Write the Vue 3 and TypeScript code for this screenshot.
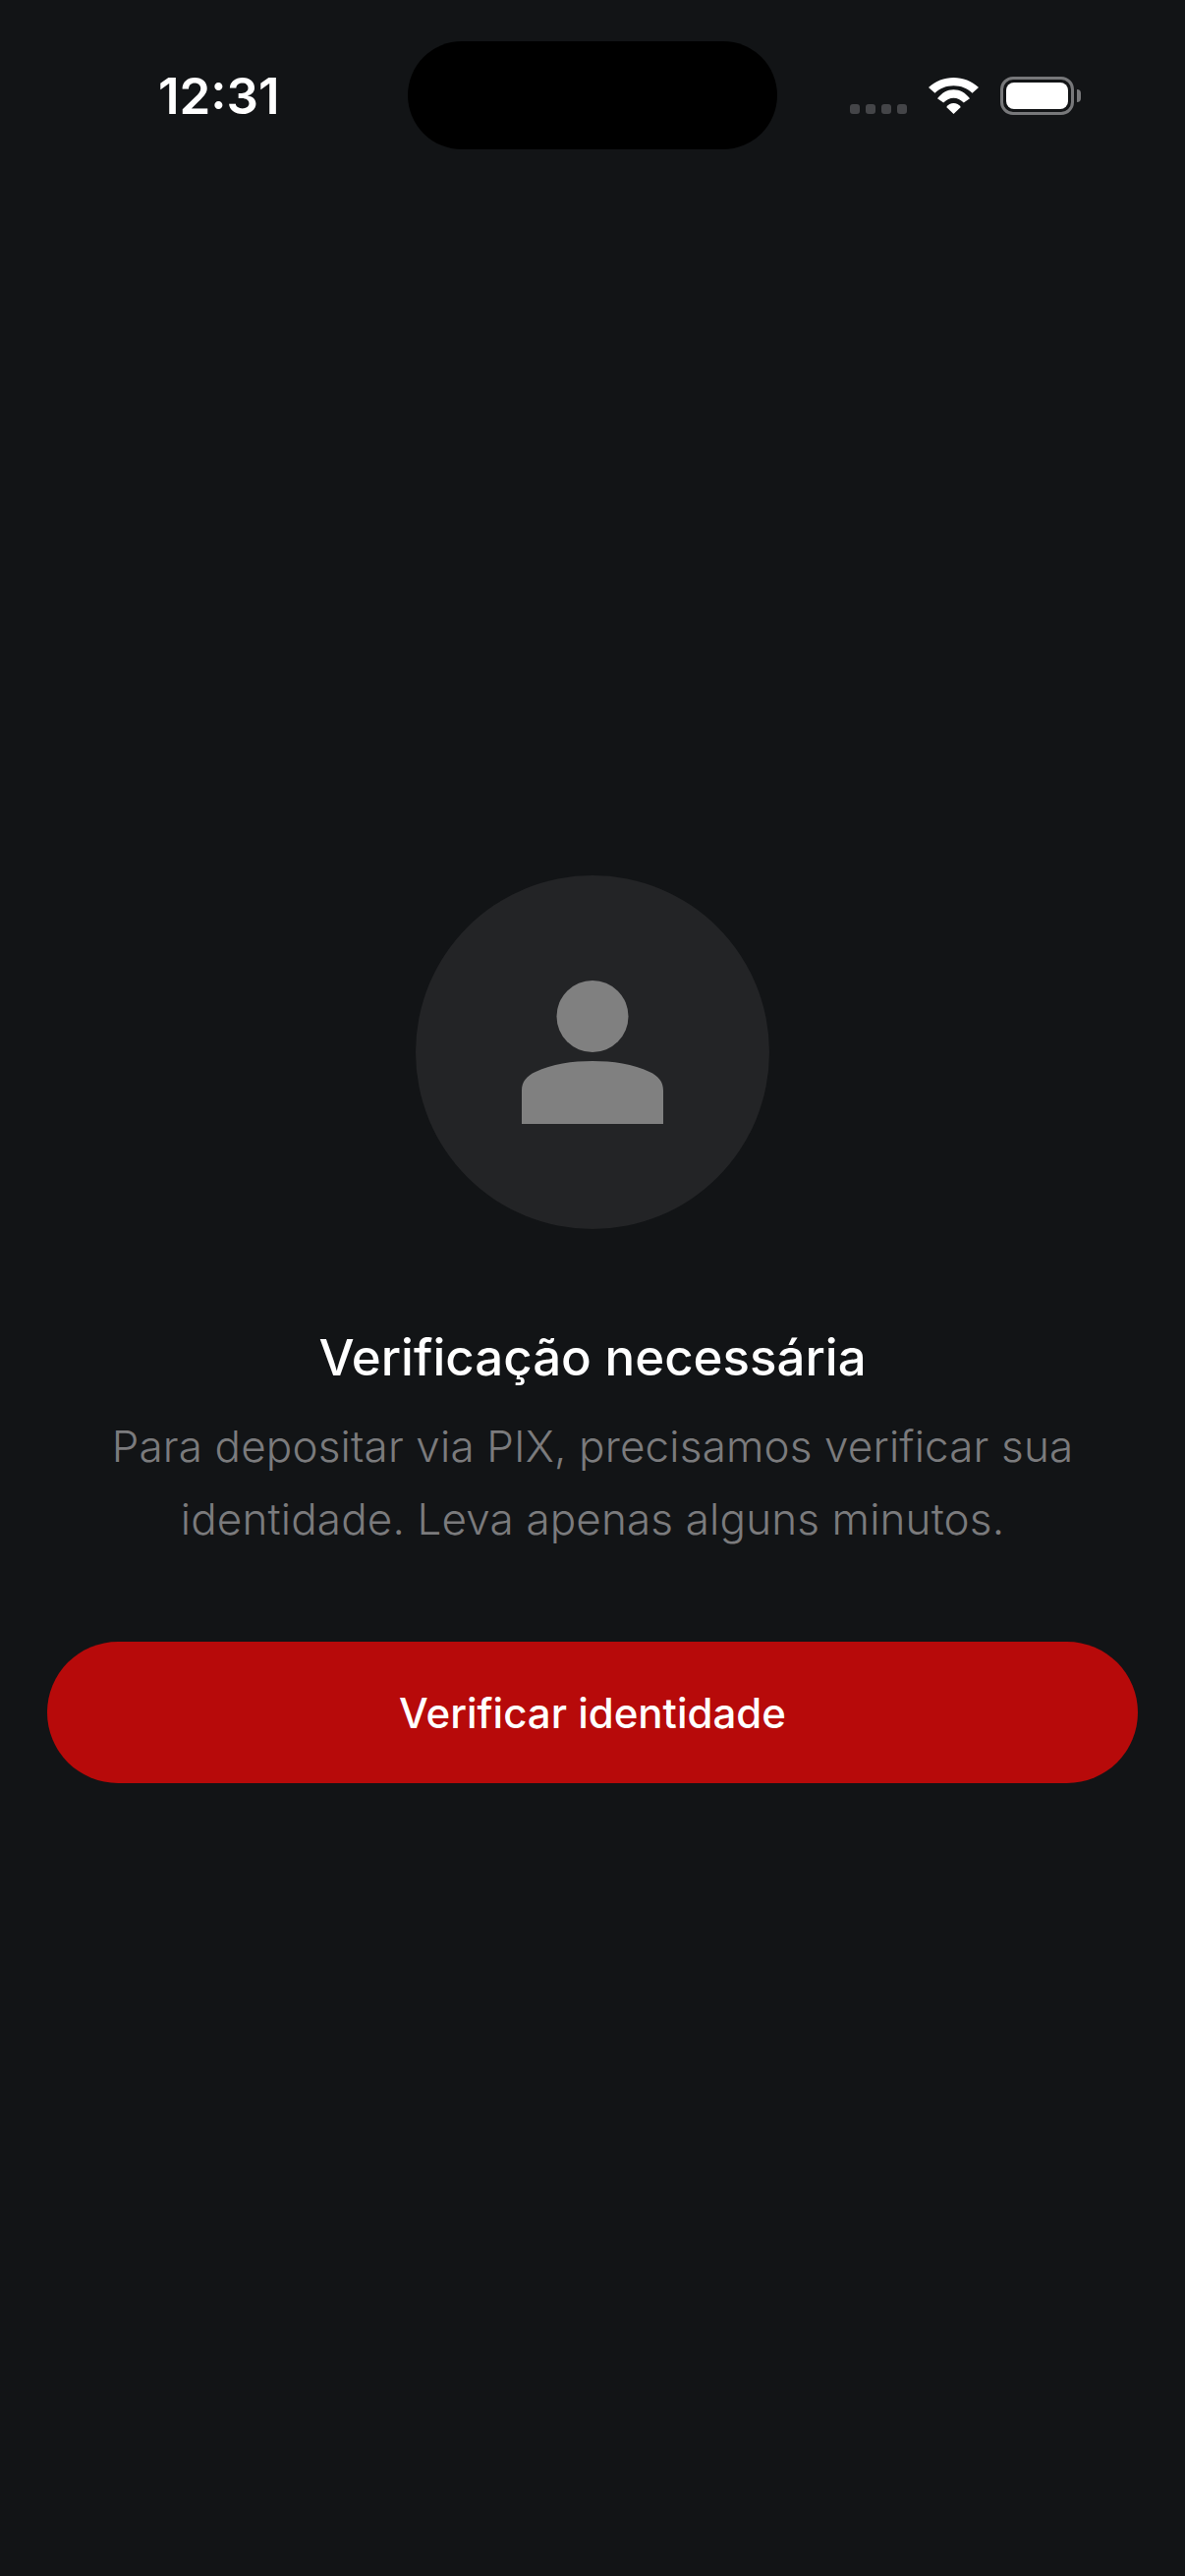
<template>
  <div class="screen">
    <header class="status-bar">
      <span class="time">12:31</span>
      <div class="island"></div>
      <div class="status-icons">
        <div class="signal">
          <i v-for="n in 4" :key="n"></i>
        </div>
        <svg class="wifi" width="51" height="37" viewBox="0 0 51 37">
          <path d="M0 10C7 3.500 16 0 25.500 0S44 3.500 51 10L44.500 15.800C39.500 11 33 8.300 25.500 8.300S11.500 11 6.500 15.800Z" fill="#fff" />
          <path d="M9 21.300C13.500 15.500 19 12.300 25.500 12.300S37.500 15.500 42 21.300L35.800 25.600C32.500 22.500 29.300 20.800 25.500 20.800S18.500 22.500 15.200 25.600Z" fill="#fff" />
          <path d="M18.200 30C20 27.500 22.500 26 25.500 26S31 27.500 32.800 30L25.500 37Z" fill="#fff" />
        </svg>
        <div class="battery">
          <div class="battery-fill"></div>
        </div>
      </div>
    </header>

    <main class="content">
      <div class="avatar">
        <svg width="144" height="146" viewBox="0 0 144 146">
          <circle cx="72" cy="36.500" r="36.500" fill="#808080" />
          <path d="M0 146V112C0 103 5 97 14 93C30 85 52 82 72 82C92 82 114 85 130 93C139 97 144 103 144 112V146Z" fill="#808080" />
        </svg>
      </div>
      <h1 class="title">{{ title }}</h1>
      <p class="description">{{ description }}</p>
      <button class="verify-btn" type="button">{{ action }}</button>
    </main>
  </div>
</template>

<script setup lang="ts">
const title = 'Verificação necessária'
const description = 'Para depositar via PIX, precisamos verificar sua identidade. Leva apenas alguns minutos.'
const action = 'Verificar identidade'
</script>

<style>
html,
body {
  background: #121416;
}
</style>

<style scoped>
.screen {
  width: 1206px;
  height: 2622px;
  background: #121416;
  font-family: Inter, "Noto Sans", sans-serif;
  overflow: hidden;
}

.status-bar {
  position: relative;
  height: 152px;
  padding: 42px 106px 0 161px;
  box-sizing: border-box;
  display: flex;
  justify-content: space-between;
  align-items: flex-start;
}

.time {
  margin-top: 28px;
  color: #fff;
  font-size: 51px;
  line-height: 56px;
  font-weight: 600;
}

.island {
  position: absolute;
  left: 415px;
  top: 42px;
  width: 376px;
  height: 110px;
  border-radius: 55px;
  background: #000;
}

.status-icons {
  display: flex;
  align-items: flex-start;
  margin-top: 36px;
  margin-right: 7px;
}

.signal {
  display: flex;
  gap: 6px;
  margin-top: 28px;
  margin-right: 22px;
}

.signal i {
  width: 10px;
  height: 10px;
  border-radius: 3px;
  background: #444548;
}

.wifi {
  margin-top: 1px;
  margin-right: 22px;
}

.battery {
  position: relative;
  width: 75px;
  height: 39px;
  box-sizing: border-box;
  border: 3px solid #77787a;
  border-radius: 13px;
  padding: 3px;
}

.battery::after {
  content: "";
  position: absolute;
  right: -10px;
  top: 10px;
  width: 4px;
  height: 13px;
  background: #77787a;
  border-radius: 0 6px 6px 0;
}

.battery-fill {
  height: 100%;
  background: #fff;
  border-radius: 8px;
}

.content {
  display: flex;
  flex-direction: column;
  align-items: center;
  padding: 739px 48px 0;
}

.avatar {
  width: 360px;
  height: 360px;
  border-radius: 50%;
  background: #232426;
  display: flex;
  align-items: center;
  justify-content: center;
}

.title {
  margin: 101px 0 0;
  color: #fff;
  font-size: 51px;
  line-height: 60px;
  font-weight: 500;
  text-align: center;
}

.description {
  width: 1000px;
  margin: 23px 0 0;
  color: #7b7b7d;
  font-size: 44px;
  line-height: 74px;
  font-weight: 300;
  letter-spacing: 0.15px;
  text-align: center;
}

.verify-btn {
  width: 1110px;
  height: 144px;
  margin-top: 88px;
  border: 0;
  border-radius: 72px;
  background: #b70a0a;
  color: #fff;
  font-family: inherit;
  font-size: 42px;
  font-weight: 500;
}
</style>
